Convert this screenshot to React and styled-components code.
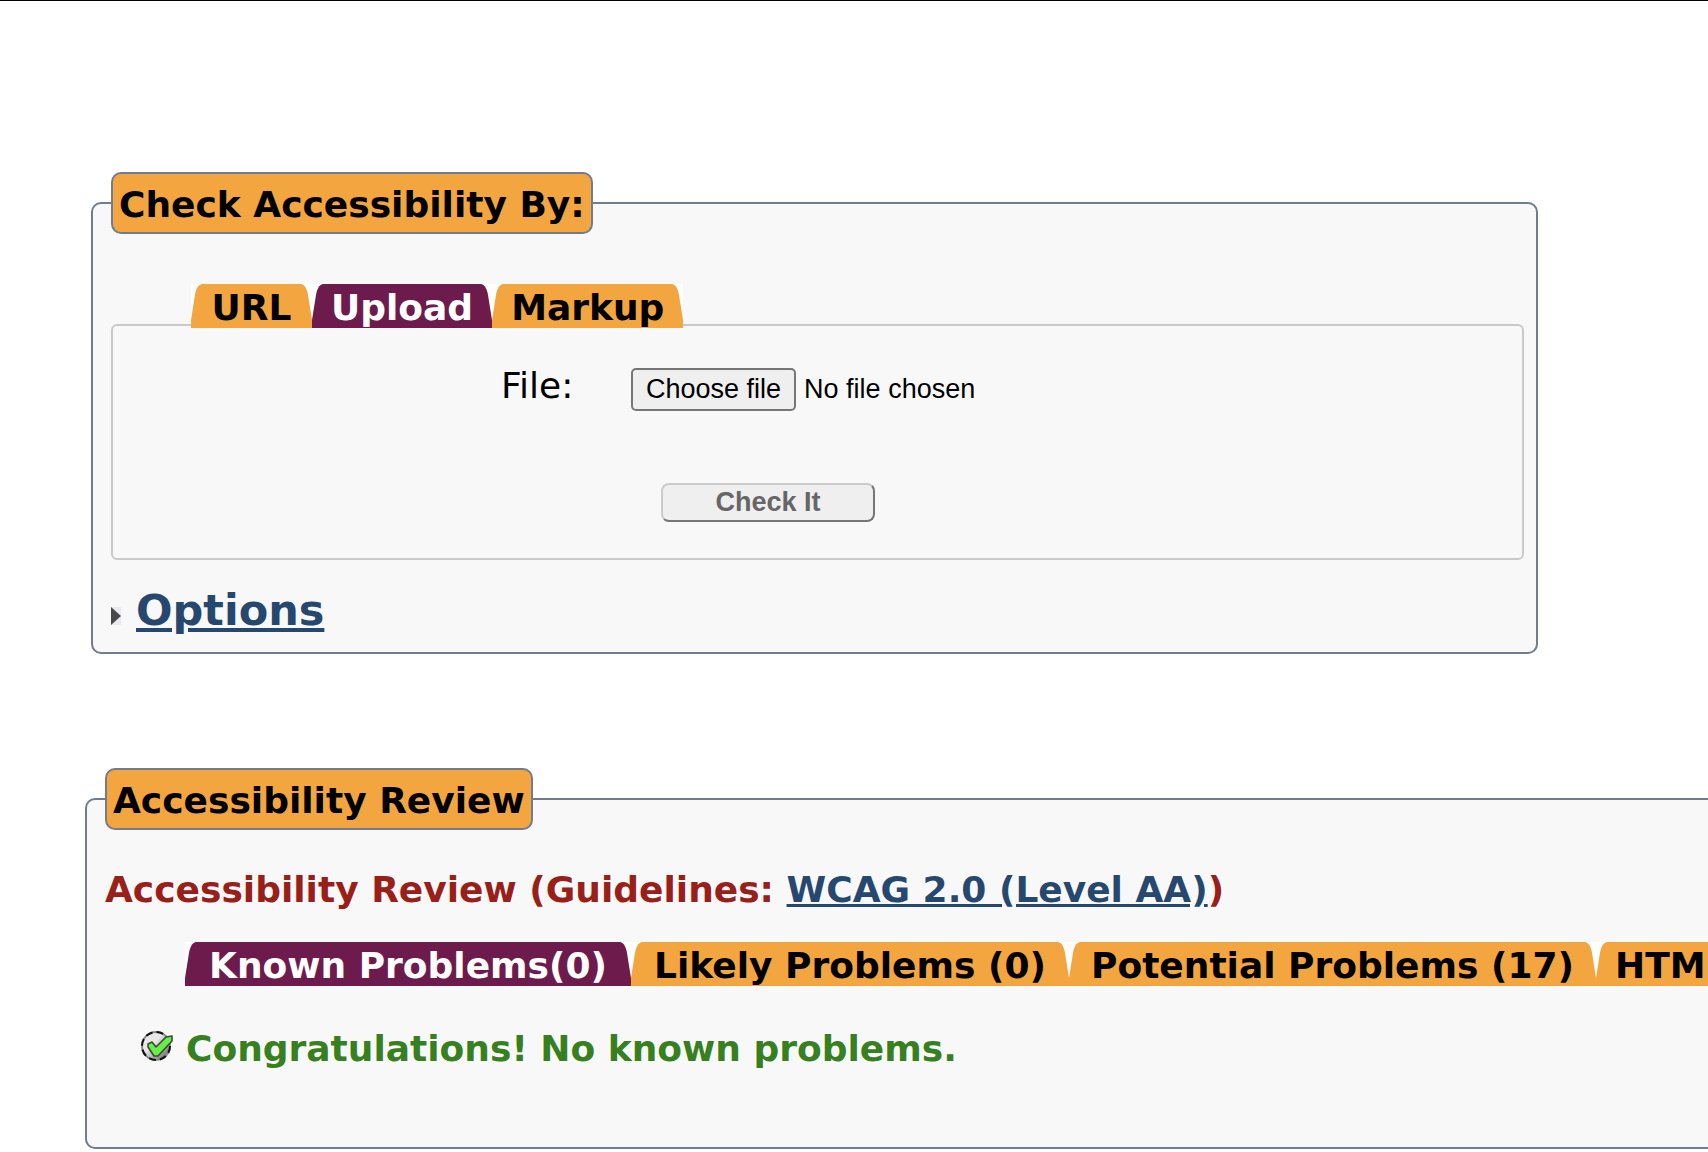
import React, { useRef } from "react";
import styled, { createGlobalStyle } from "styled-components";

const GlobalStyle = createGlobalStyle`
  *, *::before, *::after { box-sizing: border-box; }
  body {
    margin: 0;
    background: #ffffff;
    color: #000000;
    font-family: Verdana, "DejaVu Sans", sans-serif;
    font-size: 36px;
    line-height: 42px;
  }
`;

const Page = styled.main`
  display: flex;
  flex-direction: column;
  gap: 114px;
  overflow: hidden;
  border-top: 1px solid #000000;
  padding-top: 171px;
`;

const Panel = styled.fieldset`
  margin: 0 ${(p) => p.$right}px 0 ${(p) => p.$left}px;
  padding: 0 12px ${(p) => p.$bottom}px 18px;
  border: 2px solid #707c8f;
  border-radius: 10px;
  background: #f8f8f8;
  min-width: 0;
`;

const Legend = styled.legend`
  padding: 11px 6px 7px;
  border: 2px solid #707c8f;
  border-radius: 10px;
  background: #f3a53f;
  font-weight: bold;
  line-height: 40px;
`;

const TabBar = styled.nav`
  position: relative;
  display: flex;
  margin-top: ${(p) => p.$top}px;
  padding-left: 80px;
`;

const TabLink = styled.a`
  display: flex;
  flex: none;
  min-width: ${(p) => p.$min || 0}px;
  height: 44px;
  background: #ffffff;
  color: ${(p) => (p.$active ? "#ffffff" : "#000000")};
  font-weight: bold;
  text-decoration: none;
  white-space: nowrap;
`;

const TabText = styled.span`
  flex: 1;
  padding: 3px 8px 0;
  background: ${(p) => (p.$active ? "#6d1b4d" : "#f3a53f")};
  line-height: 41px;
  text-align: center;
`;

const Edge = styled.svg`
  display: block;
  flex: none;
  fill: ${(p) => (p.$active ? "#6d1b4d" : "#f3a53f")};
`;

const FormBox = styled.div`
  margin-top: -4px;
  padding: 42px 0 36px 388px;
  border: 2px solid #c9c9c9;
  border-radius: 6px;
`;

const FileRow = styled.div`
  display: flex;
  align-items: flex-start;
`;

const FileLabel = styled.label`
  width: 130px;
  line-height: 36px;
`;

const ChooseButton = styled.button`
  height: 43px;
  padding: 0 13px;
  border: 2px solid #767676;
  border-radius: 5px;
  background: #efefef;
  color: #000000;
  font: 27px "Liberation Sans", Arial, sans-serif;
`;

const FileName = styled.span`
  padding-left: 8px;
  font: 27px/43px "Liberation Sans", Arial, sans-serif;
`;

const SubmitButton = styled.button`
  display: block;
  width: 214px;
  height: 39px;
  margin: 72px 0 0 160px;
  padding: 0;
  border: 2px solid;
  border-color: #cbcbcb #767676 #767676 #cbcbcb;
  border-radius: 8px;
  background: #efefef;
  color: #666666;
  font: bold 27px "Liberation Sans", Arial, sans-serif;
`;

const OptionsRow = styled.h2`
  display: flex;
  align-items: center;
  gap: 15px;
  margin: 22px 0 0;
  font-size: 43px;
  line-height: 56px;
`;

const Link = styled.a`
  color: #26486f;
  text-decoration: underline;
`;

const ArrowIcon = styled.svg`
  display: block;
  margin-top: 12px;
`;

const ReviewTitle = styled.h3`
  margin: 39px 0 0;
  color: #982018;
  font-size: 36px;
  white-space: nowrap;
`;

const Message = styled.p`
  display: flex;
  align-items: flex-start;
  gap: 13px;
  margin: 42px 0 0 36px;
  color: #378020;
  font-weight: bold;
`;

const StatusIcon = styled.svg`
  display: block;
  margin-top: 2px;
`;

function Tab({ active, min, children }) {
  return (
    <TabLink href="#" $active={active} $min={min} aria-current={active ? "true" : undefined}>
      <Edge $active={active} width="11" height="44" viewBox="0 0 11 44" aria-hidden="true">
        <path d="M11 0C7 1 5 5 4 11L0 36V44H11Z" />
      </Edge>
      <TabText $active={active}>{children}</TabText>
      <Edge $active={active} width="11" height="44" viewBox="0 0 11 44" aria-hidden="true">
        <path d="M0 0C4 1 6 5 7 11L11 36V44H0Z" />
      </Edge>
    </TabLink>
  );
}

function CheckIcon() {
  return (
    <StatusIcon width="32" height="32" viewBox="0 0 32 32" aria-hidden="true">
      <defs>
        <linearGradient id="disc" x1="0" y1="0" x2="1" y2="1">
          <stop offset="0.4" stopColor="#e8e8e8" />
          <stop offset="0.9" stopColor="#707070" />
        </linearGradient>
      </defs>
      <circle cx="15" cy="16" r="14" fill="url(#disc)" stroke="#8a8a8a" strokeWidth="2" />
      <circle cx="15" cy="16" r="14" fill="none" stroke="#111111" strokeWidth="2" strokeDasharray="7 4" />
      <path d="M7 14L11 12L15 17L25 7L31 6V11L17 26H13L7 17Z" fill="#66f044" stroke="#3a4a3a" strokeWidth="1.6" strokeLinejoin="round" />
    </StatusIcon>
  );
}

export default function App() {
  const fileInput = useRef(null);
  return (
    <>
      <GlobalStyle />
      <Page>
        <Panel $left={91} $right={170} $bottom={14}>
          <Legend>Check Accessibility By:</Legend>
          <TabBar $top={50}>
            <Tab min={121}>URL</Tab>
            <Tab active>Upload</Tab>
            <Tab>Markup</Tab>
          </TabBar>
          <FormBox>
            <FileRow>
              <FileLabel htmlFor="file">File:</FileLabel>
              <input ref={fileInput} id="file" type="file" hidden />
              <ChooseButton type="button" onClick={() => fileInput.current.click()}>
                Choose file
              </ChooseButton>
              <FileName>No file chosen</FileName>
            </FileRow>
            <SubmitButton type="submit" disabled>Check It</SubmitButton>
          </FormBox>
          <OptionsRow>
            <ArrowIcon width="10" height="18" viewBox="0 0 10 18" aria-hidden="true">
              <rect width="10" height="18" fill="#e9e9f0" />
              <path d="M0 0L10 9L0 18Z" fill="#484848" />
            </ArrowIcon>
            <Link href="#">Options</Link>
          </OptionsRow>
        </Panel>

        <Panel $left={85} $right={-120} $bottom={77}>
          <Legend>Accessibility Review</Legend>
          <ReviewTitle>
            Accessibility Review (Guidelines: <Link href="#">WCAG 2.0 (Level AA)</Link>)
          </ReviewTitle>
          <TabBar $top={31}>
            <Tab active min={446}>Known Problems(0)</Tab>
            <Tab min={438}>Likely Problems (0)</Tab>
            <Tab min={527}>Potential Problems (17)</Tab>
            <Tab>HTM</Tab>
          </TabBar>
          <Message>
            <CheckIcon />
            Congratulations! No known problems.
          </Message>
        </Panel>
      </Page>
    </>
  );
}
